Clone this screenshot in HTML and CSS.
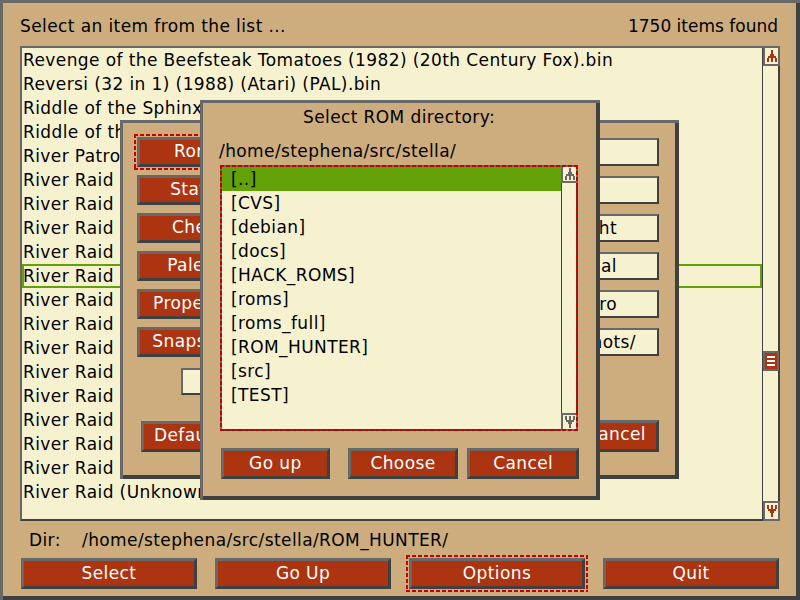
FILE: index.html
```html
<!DOCTYPE html>
<html>
<head>
<meta charset="utf-8">
<title>Stella ROM launcher</title>
<link rel="stylesheet" href="styles.css">
</head>
<body>
<div class="screen">
  <div class="topbar">
    <span>Select an item from the list ...</span>
    <span class="count">1750 items found</span>
  </div>

  <div class="gamelist">
    <ul class="rows">
      <li>Revenge of the Beefsteak Tomatoes (1982) (20th Century Fox).bin</li>
      <li>Reversi (32 in 1) (1988) (Atari) (PAL).bin</li>
      <li>Riddle of the Sphinx (1982) (Imagic).bin</li>
      <li>Riddle of the Sphinx (1982) (Imagic) (PAL).bin</li>
      <li>River Patrol (1984) (Tigervision).bin</li>
      <li>River Raid (1982) (Activision).bin</li>
      <li>River Raid (1982) (Activision) [a].bin</li>
      <li>River Raid (1982) (Activision) (PAL).bin</li>
      <li>River Raid (1982) (Activision) [h1].bin</li>
      <li class="current">River Raid (1982) (Activision) [h2].bin</li>
      <li>River Raid (1982) (Activision) [h3].bin</li>
      <li>River Raid (1982) (Activision) [t1].bin</li>
      <li>River Raid (1982) (Activision) [t2].bin</li>
      <li>River Raid (1983) (Digivision).bin</li>
      <li>River Raid (1983) (Polyvox).bin</li>
      <li>River Raid (1984) (CCE).bin</li>
      <li>River Raid (1984) (Dynacom).bin</li>
      <li>River Raid (1984) (Supergame).bin</li>
      <li>River Raid (Unknown).bin</li>
    </ul>
    <div class="scrollbar">
      <div class="sb-btn sb-up">
        <svg class="arrow red" viewBox="0 0 10 12" shape-rendering="crispEdges"><rect x="4" y="0" width="2" height="12"/><rect x="3" y="4" width="4" height="3"/><rect x="1" y="6" width="8" height="2"/><rect x="0" y="8" width="2" height="4"/><rect x="8" y="8" width="2" height="4"/></svg>
      </div>
      <div class="sb-track">
        <div class="thumb"><i></i><i></i><i></i></div>
      </div>
      <div class="sb-btn sb-down">
        <svg class="arrow red" viewBox="0 0 10 12" shape-rendering="crispEdges"><rect x="4" y="0" width="2" height="12"/><rect x="3" y="5" width="4" height="3"/><rect x="1" y="4" width="8" height="2"/><rect x="0" y="0" width="2" height="4"/><rect x="8" y="0" width="2" height="4"/></svg>
      </div>
    </div>
  </div>

  <div class="dirrow">
    <span class="dirlabel">Dir:</span>
    <span>/home/stephena/src/stella/ROM_HUNTER/</span>
  </div>

  <div class="btnrow">
    <div class="btn main">Select</div>
    <div class="btn main">Go Up</div>
    <div class="btn main focus">Options</div>
    <div class="btn main">Quit</div>
  </div>

  <div class="dialog options">
    <div class="opt-row">
      <div class="btn opt focus">Rom Path</div>
      <div class="field"><span>~/roms/</span></div>
    </div>
    <div class="opt-row">
      <div class="btn opt">State Path</div>
      <div class="field"><span>~/.stella/state/</span></div>
    </div>
    <div class="opt-row">
      <div class="btn opt">Cheat File</div>
      <div class="field tail"><span>~/.stella/stella.cht</span></div>
    </div>
    <div class="opt-row">
      <div class="btn opt">Palette File</div>
      <div class="field tail"><span>~/.stella/stella.pal</span></div>
    </div>
    <div class="opt-row">
      <div class="btn opt">Properties File</div>
      <div class="field tail"><span>~/.stella/stella.pro</span></div>
    </div>
    <div class="opt-row">
      <div class="btn opt">Snapshot Path</div>
      <div class="field tail long"><span>~/.stella/snapshots/</span></div>
    </div>
    <div class="opt-row">
      <div class="check"></div>
    </div>
    <div class="opt-bottom">
      <div class="btn opt defaults">Defaults</div>
      <div class="btn opt cancel">Cancel</div>
    </div>
  </div>

  <div class="dialog browser">
    <div class="dtitle">Select ROM directory:</div>
    <div class="dpath">/home/stephena/src/stella/</div>
    <div class="flist focus tight">
      <ul class="frows">
        <li class="sel">[..]</li>
        <li>[CVS]</li>
        <li>[debian]</li>
        <li>[docs]</li>
        <li>[HACK_ROMS]</li>
        <li>[roms]</li>
        <li>[roms_full]</li>
        <li>[ROM_HUNTER]</li>
        <li>[src]</li>
        <li>[TEST]</li>
      </ul>
      <div class="fscroll">
        <div class="fsb-btn fsb-up">
          <svg class="arrow gray" viewBox="0 0 10 12" shape-rendering="crispEdges"><rect x="4" y="0" width="2" height="12"/><rect x="3" y="4" width="4" height="3"/><rect x="1" y="6" width="8" height="2"/><rect x="0" y="8" width="2" height="4"/><rect x="8" y="8" width="2" height="4"/></svg>
        </div>
        <div class="fsb-track"></div>
        <div class="fsb-btn fsb-down">
          <svg class="arrow gray" viewBox="0 0 10 12" shape-rendering="crispEdges"><rect x="4" y="0" width="2" height="12"/><rect x="3" y="5" width="4" height="3"/><rect x="1" y="4" width="8" height="2"/><rect x="0" y="0" width="2" height="4"/><rect x="8" y="0" width="2" height="4"/></svg>
        </div>
      </div>
    </div>
    <div class="dbtns">
      <div class="btn dbtn goup">Go up</div>
      <div class="btn dbtn choose">Choose</div>
      <div class="btn dbtn dcancel">Cancel</div>
    </div>
  </div>
</div>
</body>
</html>
```

FILE: styles.css
```css
* { box-sizing: border-box; }

html, body {
  margin: 0;
  padding: 0;
}

body {
  width: 800px;
  height: 600px;
  overflow: hidden;
  background: #cdad7d;
  font-family: "DejaVu Sans", sans-serif;
  font-size: 17px;
  letter-spacing: 0.4px;
  color: #000;
}

.screen {
  position: relative;
  width: 800px;
  height: 600px;
  background: #cdad7d;
  box-shadow: inset 3px 3px 0 #686868, inset -4px -4px 0 #404040;
  padding: 0 20px;
  display: flex;
  flex-direction: column;
}

.topbar {
  height: 46px;
  padding: 14px 2px 0 0;
  display: flex;
  justify-content: space-between;
  line-height: 24px;
  white-space: nowrap;
}

.count {
  letter-spacing: 0;
}

/* ---------- main game list ---------- */
.gamelist {
  display: flex;
  height: 475px;
  border: 2px solid;
  border-color: #686868 #404040 #404040 #686868;
  background: #f6f2d0;
}

.rows {
  flex: 1;
  margin: 0;
  padding: 0;
  list-style: none;
  overflow: hidden;
}

.rows li {
  height: 24px;
  line-height: 24px;
  padding-left: 1px;
  white-space: nowrap;
}

.rows li.current {
  box-shadow: inset 0 0 0 2px #62a108;
}

.scrollbar {
  width: 16px;
  display: flex;
  flex-direction: column;
  border-left: 1px solid #404040;
}

.sb-btn {
  width: 17px;
  height: 20px;
  margin-right: -2px;
  border: 2px solid #686868;
  background: #f6f2d0;
  display: flex;
  align-items: center;
  justify-content: center;
  flex: none;
}

.sb-up { margin-top: -2px; }
.sb-down { margin-bottom: -2px; }

.arrow {
  width: 10px;
  height: 12px;
  display: block;
}

.arrow.red { fill: #ac3410; }
.arrow.gray { fill: #686868; }

.sb-track {
  flex: 1;
  display: flex;
  flex-direction: column;
}

.thumb {
  width: 16px;
  height: 20px;
  margin-top: 285px;
  margin-right: -1px;
  border: 2px solid #686868;
  background: #ac3410;
  display: flex;
  flex-direction: column;
  justify-content: center;
  gap: 2px;
  padding: 0 2px;
}

.thumb i {
  display: block;
  height: 2px;
  background: #fff;
}

/* ---------- dir row and buttons ---------- */
.dirrow {
  height: 37px;
  padding: 7px 0 0 9px;
  display: flex;
  line-height: 24px;
  white-space: nowrap;
}

.dirlabel {
  width: 53px;
}

.btnrow {
  display: flex;
  gap: 18px;
  padding-left: 1px;
}

.btn {
  position: relative;
  background: #ac3410;
  color: #fff;
  text-align: center;
  white-space: nowrap;
  border: 3px solid;
  border-color: #686868 #404040 #404040 #686868;
  line-height: 24px;
}

.btn.main {
  width: 176px;
  height: 31px;
}

.focus::after {
  content: "";
  position: absolute;
  top: -6px;
  left: -6px;
  right: -6px;
  bottom: -6px;
  pointer-events: none;
  background:
    repeating-linear-gradient(90deg, #c80000 0 4px, transparent 4px 6px) top / 100% 2px no-repeat,
    repeating-linear-gradient(90deg, #c80000 0 4px, transparent 4px 6px) bottom / 100% 2px no-repeat,
    repeating-linear-gradient(180deg, #c80000 0 4px, transparent 4px 6px) left / 2px 100% no-repeat,
    repeating-linear-gradient(180deg, #c80000 0 4px, transparent 4px 6px) right / 2px 100% no-repeat;
}

.focus.tight::after {
  top: -2px;
  left: -2px;
  right: -2px;
  bottom: -2px;
}

/* ---------- dialogs ---------- */
.dialog {
  position: absolute;
  background: #cdad7d;
  box-shadow: inset 3px 3px 0 #686868, inset -4px -4px 0 #404040;
}

.options {
  left: 120px;
  top: 120px;
  width: 559px;
  height: 359px;
  padding: 17px 20px 0 17px;
}

.opt-row {
  display: flex;
  justify-content: space-between;
  align-items: flex-start;
  height: 30px;
  margin-bottom: 8px;
}

.btn.opt {
  width: 158px;
  height: 30px;
  line-height: 23px;
}

.field {
  width: 290px;
  height: 28px;
  margin-top: 1px;
  border: 2px solid;
  border-color: #686868 #404040 #404040 #686868;
  background: #f6f2d0;
  line-height: 24px;
  white-space: nowrap;
  overflow: hidden;
  padding-left: 6px;
  display: flex;
}

.field span {
  flex: none;
}

.field.tail {
  justify-content: flex-end;
  padding-right: 40px;
}

.field.tail.long {
  padding-right: 21px;
}

.check {
  width: 40px;
  height: 27px;
  margin: 3px 0 0 44px;
  border: 2px solid;
  border-color: #686868 #404040 #404040 #686868;
  background: #f6f2d0;
}

.opt-bottom {
  display: flex;
  justify-content: space-between;
  margin-top: 26px;
}

.btn.defaults {
  margin-left: 4px;
  width: 100px;
  height: 31px;
}

.btn.cancel {
  width: 86px;
  height: 32px;
  margin-top: -1px;
}

/* ---------- directory browser ---------- */
.browser {
  left: 200px;
  top: 100px;
  width: 400px;
  height: 400px;
  padding: 5px 21px 0 19px;
  display: flex;
  flex-direction: column;
}

.dtitle {
  line-height: 24px;
  text-align: center;
  white-space: nowrap;
}

.dpath {
  margin-top: 10px;
  line-height: 24px;
  white-space: nowrap;
}

.flist {
  position: relative;
  margin: 2px 0 0 1px;
  width: 358px;
  height: 266px;
  display: flex;
  border: 2px solid;
  border-color: #686868 #404040 #404040 #686868;
  background: #f6f2d0;
  flex: none;
}

.frows {
  flex: 1;
  margin: 0;
  padding: 0;
  list-style: none;
  overflow: hidden;
}

.frows li {
  height: 24px;
  line-height: 24px;
  padding-left: 9px;
  white-space: nowrap;
}

.frows li.sel {
  background: #62a108;
}

.fscroll {
  width: 15px;
  display: flex;
  flex-direction: column;
  border-left: 1px solid #404040;
}

.fsb-btn {
  width: 17px;
  height: 18px;
  margin-left: -1px;
  margin-right: -2px;
  border: 2px solid #686868;
  background: #f6f2d0;
  display: flex;
  align-items: center;
  justify-content: center;
  flex: none;
}

.fsb-up { margin-top: -2px; }
.fsb-down { margin-bottom: -2px; }

.fsb-track { flex: 1; }

.dbtns {
  display: flex;
  margin-top: 17px;
}

.btn.dbtn {
  height: 31px;
}

.goup {
  width: 109px;
  margin-left: 2px;
}

.choose {
  width: 111px;
  margin-left: 18px;
}

.dcancel {
  width: 112px;
  margin-left: 9px;
}
```
